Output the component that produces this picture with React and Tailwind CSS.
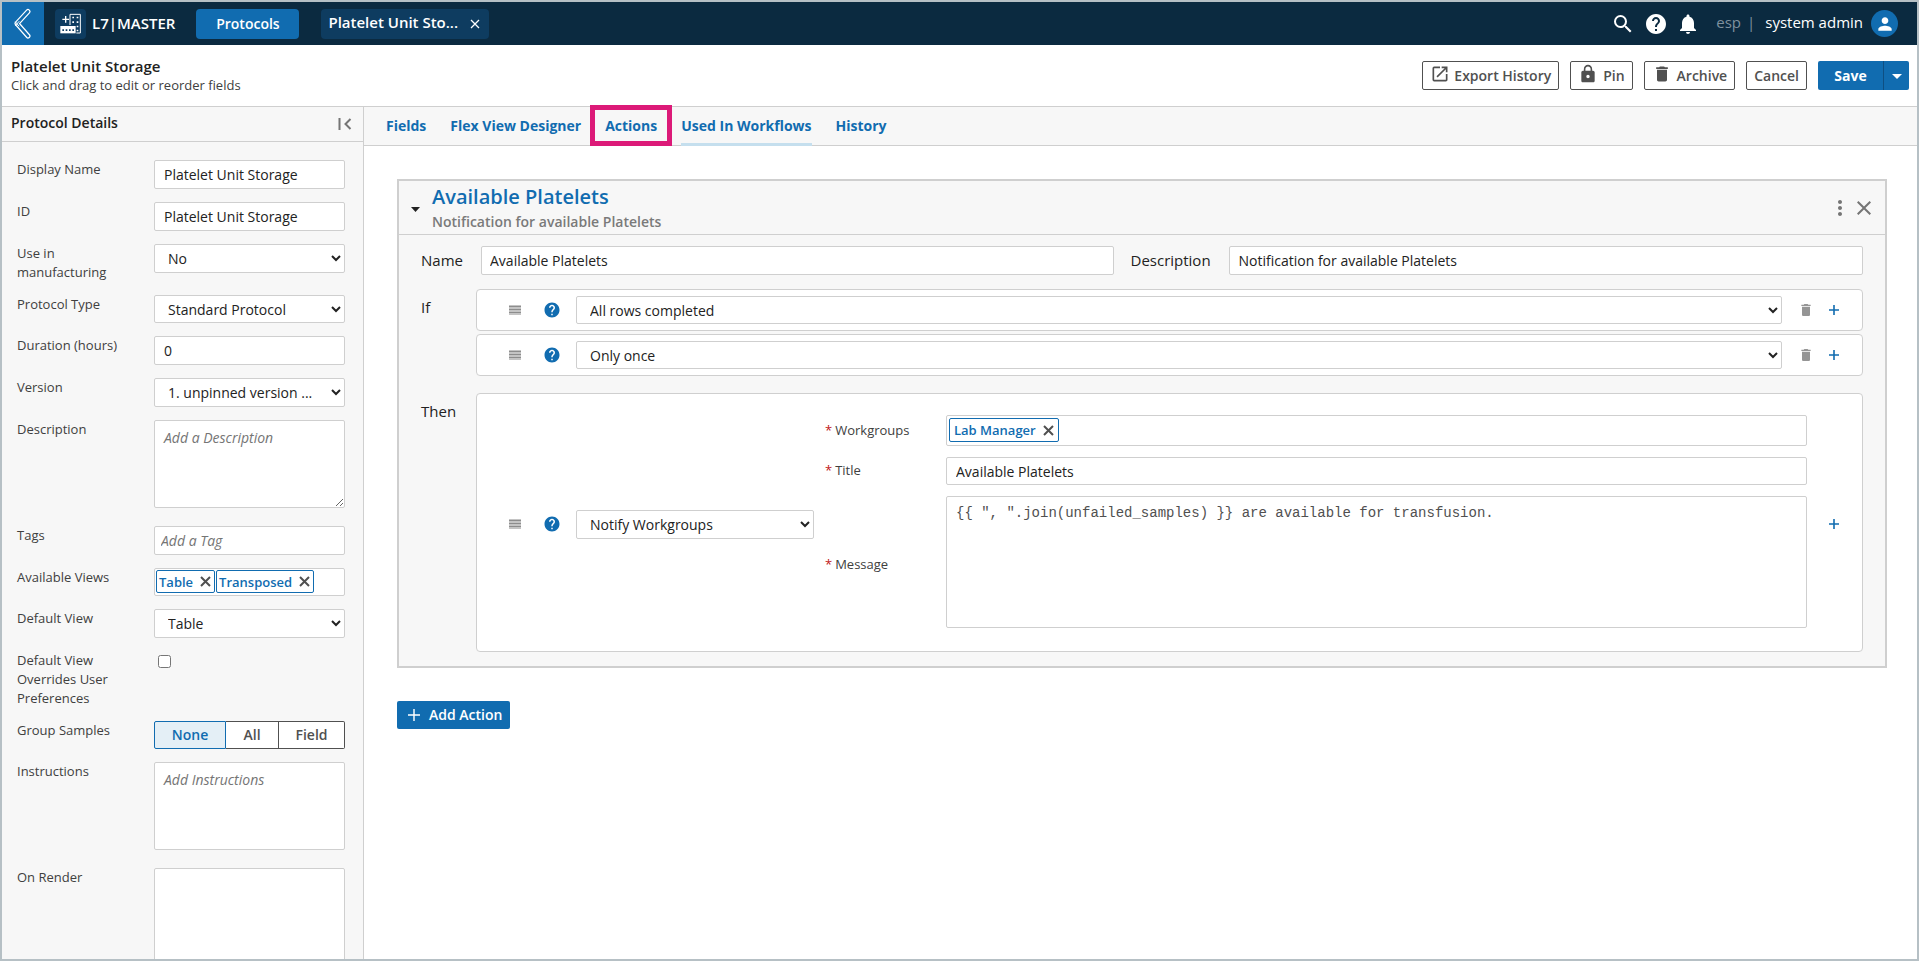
import {
    MdArrowDropDown,
    MdClose,
    MdDelete,
    MdHelp,
    MdLock,
    MdMoreVert,
    MdNotifications,
    MdOpenInNew,
    MdPerson,
    MdSearch,
} from 'react-icons/md';

const boxClass = 'w-full bg-white border border-[#cfcfcf] rounded-xs text-sm text-[#222]';
const inputClass = `${boxClass} h-[29px] px-[9px]`;
const selectClass = `${boxClass} pl-[9px]`;
const areaClass = `${boxClass} block px-[9px] py-[7px] placeholder:italic placeholder:text-[#757575]`;
const outlineButton = 'flex items-center h-[29px] border border-[#505050] rounded-xs bg-white text-[#505050] text-sm font-semibold';

function BackIcon() {
    return (
        <svg width="18" height="32" viewBox="0 0 18 32" fill="none" strokeLinecap="round" strokeLinejoin="round">
            <path d="M14 3.5 3 15.5 14 28" stroke="#fff" strokeWidth="5" />
            <path d="M14 3.5 3 15.5 14 28" stroke="#116cb0" strokeWidth="2.6" />
            <path d="M1.5 14 5 18M1.5 17.5 5 13.5" stroke="#fff" strokeWidth="1" />
        </svg>
    );
}

function BuildingIcon() {
    return (
        <svg width="22" height="21" viewBox="0 0 66 63" fill="none">
            <path d="M17 9v20M7 19h20" stroke="#fff" strokeWidth="4" />
            <path d="M30 36V4h31v56H49" stroke="#fff" strokeWidth="3" />
            <path d="M1 39h46v22H1z" fill="#fff" />
            <path d="M7 49h5v5H7zM17 49h5v5h-5zM27 49h5v5h-5zM37 49h5v5h-5z" fill="#0e3c60" />
            <path
                d="M37 11h5v5h-5zM50 11h5v5h-5zM37 25h5v5h-5zM50 25h5v5h-5zM50 38h5v5h-5zM50 50h5v5h-5z"
                fill="#fff"
            />
        </svg>
    );
}

function DragHandle() {
    return (
        <svg width="12" height="10" viewBox="0 0 12 10" className="shrink-0">
            <path d="M0 0h12v10H0z" fill="#c4c4c4" />
            <path d="M0 1.5h12M0 4.5h12M0 7.5h12" stroke="#8d8d8d" strokeWidth="1" />
        </svg>
    );
}

function PlusIcon({ size, width }) {
    return (
        <svg width={size} height={size} viewBox="0 0 10 10" fill="none">
            <path d="M5 0v10M0 5h10" stroke="currentColor" strokeWidth={width} />
        </svg>
    );
}

function CollapseIcon() {
    return (
        <svg width="14" height="14" viewBox="0 0 14 14" fill="none" stroke="#757575" strokeWidth="2">
            <path d="M1.5 1v12M12.5 2 7.5 7l5 5" />
        </svg>
    );
}

function Chip({ children, className }) {
    return (
        <span className={`flex items-center border border-[#116cb0] rounded-xs bg-white text-[13px] leading-5 font-semibold text-[#116cb0] ${className}`}>
            {children}
            <button type="button" aria-label={`Remove ${children}`} className="text-[#505050]">
                <svg width="11" height="11" viewBox="0 0 11 11" stroke="currentColor" strokeWidth="2">
                    <path d="m1 1 9 9M10 1l-9 9" />
                </svg>
            </button>
        </span>
    );
}

function TopBar() {
    return (
        <header className="flex items-center h-[43px] shrink-0 bg-[#0b2a40] text-white">
            <button type="button" aria-label="Back" className="flex items-center justify-center w-[42px] h-full bg-[#116cb0]">
                <BackIcon />
            </button>
            <div className="ml-[11px] flex items-center justify-center w-[31px] h-[30px] rounded bg-[#0e3c60]">
                <BuildingIcon />
            </div>
            <span className="ml-1.5 text-[15px] font-semibold">L7|MASTER</span>
            <button type="button" className="ml-[21px] w-[103px] h-[30px] rounded bg-[#116cb0] text-sm font-semibold">
                Protocols
            </button>
            <div className="ml-[22px] flex items-center justify-between w-[168px] h-[30px] pl-[7px] pr-[9px] rounded bg-[#0e3c60]">
                <span className="pb-0.5 text-[15px] font-semibold">Platelet Unit Sto...</span>
                <button type="button" aria-label="Close tab">
                    <svg width="10" height="10" viewBox="0 0 10 10" stroke="currentColor" strokeWidth="1.3">
                        <path d="m1 1 8 8M9 1 1 9" />
                    </svg>
                </button>
            </div>
            <div className="ml-auto mr-[19px] flex items-center">
                <button type="button" aria-label="Search"><MdSearch className="size-6" /></button>
                <button type="button" aria-label="Help" className="ml-[9px]"><MdHelp className="size-6" /></button>
                <button type="button" aria-label="Notifications" className="ml-2"><MdNotifications className="size-6" /></button>
                <span className="ml-4 pb-0.5 text-[15px] text-[#7f919e]">esp</span>
                <span className="ml-1.5 pb-0.5 text-[15px] text-[#7f919e]">|</span>
                <span className="ml-2.5 pb-0.5 text-[15px]">system admin</span>
                <button type="button" aria-label="Account" className="ml-2 flex items-center justify-center size-[27px] rounded-full bg-[#116cb0]">
                    <MdPerson className="size-5" />
                </button>
            </div>
        </header>
    );
}

function TitleBar() {
    return (
        <div className="flex items-center justify-between h-[62px] shrink-0 pl-[9px] pr-2 border-b border-[#cfcfcf]">
            <div className="pb-0.5">
                <h1 className="text-[15px] leading-5 font-semibold text-[#222]">Platelet Unit Storage</h1>
                <p className="text-[13px] leading-[18px] text-[#404040]">Click and drag to edit or reorder fields</p>
            </div>
            <div className="flex items-center gap-[11px]">
                <button type="button" className={`${outlineButton} pl-[7px] pr-[7px] gap-1`}>
                    <MdOpenInNew className="size-5 mb-1" />
                    Export History
                </button>
                <button type="button" className={`${outlineButton} pl-[7px] pr-[7px] gap-[5px]`}>
                    <MdLock className="size-5 mb-1" />
                    Pin
                </button>
                <button type="button" className={`${outlineButton} px-[7px] gap-[5px]`}>
                    <MdDelete className="size-5 mb-1" />
                    Archive
                </button>
                <button type="button" className={`${outlineButton} px-[7px]`}>Cancel</button>
                <div className="flex h-[29px] rounded-xs overflow-hidden bg-[#116cb0] text-white">
                    <button type="button" className="w-[66px] border-r border-[#0e4f82] text-sm font-bold">Save</button>
                    <button type="button" aria-label="More save options" className="w-[25px] flex items-center justify-center">
                        <MdArrowDropDown className="size-6" />
                    </button>
                </div>
            </div>
        </div>
    );
}

function Field({ label, id, children }) {
    return (
        <div className="flex items-start">
            <label htmlFor={id} className="w-[137px] pr-4 shrink-0 text-[13px] leading-[19px] text-[#404040]">
                {label}
            </label>
            <div className="flex-1 min-w-0">{children}</div>
        </div>
    );
}

function Sidebar() {
    return (
        <aside className="flex flex-col w-[362px] shrink-0 border-r border-[#cfcfcf] bg-[#f7f7f7]">
            <div className="flex items-center justify-between h-[35px] shrink-0 pl-[9px] pr-[11px] border-b border-[#cfcfcf]">
                <h2 className="pb-0.5 text-sm font-semibold text-[#222]">Protocol Details</h2>
                <button type="button" aria-label="Collapse panel"><CollapseIcon /></button>
            </div>
            <form className="flex flex-col gap-[13px] pt-[18px] pl-[15px] pr-[18px] overflow-hidden">
                <Field label="Display Name" id="display-name">
                    <input id="display-name" className={inputClass} defaultValue="Platelet Unit Storage" />
                </Field>
                <Field label="ID" id="protocol-id">
                    <input id="protocol-id" className={inputClass} defaultValue="Platelet Unit Storage" />
                </Field>
                <Field label="Use in manufacturing" id="manufacturing">
                    <select id="manufacturing" className={`${selectClass} h-[29px]`}>
                        <option>No</option>
                        <option>Yes</option>
                    </select>
                </Field>
                <Field label="Protocol Type" id="protocol-type">
                    <select id="protocol-type" className={`${selectClass} block h-7`}>
                        <option>Standard Protocol</option>
                    </select>
                </Field>
                <Field label="Duration (hours)" id="duration">
                    <input id="duration" className={inputClass} defaultValue="0" />
                </Field>
                <Field label="Version" id="version">
                    <select id="version" className={`${selectClass} h-[29px]`}>
                        <option>1. unpinned version ...</option>
                    </select>
                </Field>
                <Field label="Description" id="description">
                    <textarea id="description" className={`${areaClass} h-[88px] mb-[5px]`} placeholder="Add a Description" />
                </Field>
                <Field label="Tags" id="tags">
                    <input
                        id="tags"
                        className={`${boxClass} h-[29px] px-1.5 placeholder:italic placeholder:text-[#757575]`}
                        placeholder="Add a Tag"
                    />
                </Field>
                <Field label="Available Views">
                    <div className="flex items-start gap-px h-7 p-px bg-white border border-[#cfcfcf] rounded-xs">
                        <Chip className="h-[23px] pl-[2px] pr-[3px] gap-[7px]">Table</Chip>
                        <Chip className="h-[23px] pl-[2px] pr-[3px] gap-[7px]">Transposed</Chip>
                    </div>
                </Field>
                <Field label="Default View" id="default-view">
                    <select id="default-view" className={`${selectClass} h-[29px]`}>
                        <option>Table</option>
                        <option>Transposed</option>
                    </select>
                </Field>
                <Field label="Default View Overrides User Preferences" id="overrides">
                    <input id="overrides" type="checkbox" className="block size-[13px] mt-1 ml-1" />
                </Field>
                <Field label="Group Samples">
                    <div className="flex h-7 text-sm font-semibold text-[#505050]">
                        <button type="button" className="w-[72px] border border-[#116cb0] rounded-l-xs bg-[#e4eff6] text-[#116cb0]">None</button>
                        <button type="button" className="w-[53px] border-y border-r border-[#505050] bg-white">All</button>
                        <button type="button" className="flex-1 border-y border-r border-[#505050] rounded-r-xs bg-white">Field</button>
                    </div>
                </Field>
                <Field label="Instructions" id="instructions">
                    <textarea id="instructions" className={`${areaClass} h-[88px] mb-[5px] resize-none`} placeholder="Add Instructions" />
                </Field>
                <Field label="On Render" id="on-render">
                    <textarea id="on-render" className={`${areaClass} h-[120px] resize-none`} />
                </Field>
            </form>
        </aside>
    );
}

function Tabs() {
    return (
        <nav className="flex items-stretch gap-6 h-[39px] shrink-0 pl-[22px] border-b border-[#cfcfcf] bg-[#f7f7f7] text-sm leading-[38px] font-bold text-[#116cb0]">
            <a href="#fields">Fields</a>
            <a href="#flex-view">Flex View Designer</a>
            <a href="#actions" className="relative">
                Actions
                <span className="absolute -inset-x-[15px] -top-0.5 -bottom-px border-5 border-[#dc1a78]" />
            </a>
            <a href="#workflows" className="-mb-px border-b-3 border-[#c5dfee]">Used In Workflows</a>
            <a href="#history">History</a>
        </nav>
    );
}

function ConditionRow({ value, label }) {
    return (
        <div className="flex items-center h-[42px] pl-8 pr-[23px] bg-white border border-[#cfcfcf] rounded">
            <DragHandle />
            <MdHelp className="ml-[22px] size-[18px] shrink-0 text-[#116cb0]" />
            <select aria-label={label} className={`${selectClass} h-7 ml-[15px] flex-1`}>
                <option>{value}</option>
            </select>
            <button type="button" aria-label="Delete condition" className="ml-4 text-[#959595]">
                <MdDelete className="size-4" />
            </button>
            <button type="button" aria-label="Add condition" className="ml-[15px] text-[#116cb0]">
                <PlusIcon size={10} width={1.6} />
            </button>
        </div>
    );
}

function RequiredField({ label, id, children }) {
    return (
        <div className="flex items-center">
            <label htmlFor={id} className="w-[121px] shrink-0 text-[13px] text-[#404040]">
                <span className="mr-[3px] text-[#c01818]">*</span>
                {label}
            </label>
            <div className="flex-1 min-w-0">{children}</div>
        </div>
    );
}

function ActionPanel() {
    return (
        <section className="border-2 border-[#cfcfcf] bg-[#f7f7f7]">
            <div className="flex items-center h-[54px] pl-3 pr-[9px] border-b border-[#cfcfcf]">
                <button type="button" aria-label="Collapse action" className="pt-1">
                    <svg width="9" height="5" viewBox="0 0 9 5"><path d="M0 0h9L4.500 5z" fill="#222" /></svg>
                </button>
                <div className="ml-3">
                    <h3 className="text-xl leading-7 font-semibold text-[#116cb0]">Available Platelets</h3>
                    <p className="text-sm leading-[22px] font-semibold text-[#7a7a7a]">Notification for available Platelets</p>
                </div>
                <button type="button" aria-label="More options" className="ml-auto text-[#757575]">
                    <MdMoreVert className="size-6" />
                </button>
                <button type="button" aria-label="Remove action" className="text-[#757575]">
                    <MdClose className="size-6" />
                </button>
            </div>

            <div className="flex items-center pt-[11px] px-[22px] text-[15px] text-[#222]">
                <label htmlFor="action-name" className="w-[60px] shrink-0">Name</label>
                <input id="action-name" className={`${boxClass} h-[29px] px-2 flex-1`} defaultValue="Available Platelets" />
                <label htmlFor="action-description" className="ml-[17px] w-[98px] shrink-0">Description</label>
                <input
                    id="action-description"
                    className={`${boxClass} h-[29px] px-[9px] flex-1`}
                    defaultValue="Notification for available Platelets"
                />
            </div>

            <div className="flex pt-3.5 px-[22px]">
                <span className="w-[55px] pt-2 shrink-0 text-[15px] leading-5 text-[#222]">If</span>
                <div className="flex flex-col flex-1 gap-[3px]">
                    <ConditionRow label="First condition" value="All rows completed" />
                    <ConditionRow label="Second condition" value="Only once" />
                </div>
            </div>

            <div className="flex pt-[17px] pb-3.5 px-[22px]">
                <span className="w-[55px] pt-2 shrink-0 text-[15px] leading-5 text-[#222]">Then</span>
                <div className="flex items-center flex-1 pt-[21px] pb-[18px] pl-8 pr-[23px] bg-white border border-[#cfcfcf] rounded">
                    <DragHandle />
                    <MdHelp className="ml-[22px] size-[18px] shrink-0 text-[#116cb0]" />
                    <div className="ml-[15px] w-[238px] shrink-0">
                        <select aria-label="Action type" className={`${selectClass} block h-[29px]`}>
                            <option>Notify Workgroups</option>
                        </select>
                    </div>
                    <div className="ml-[11px] flex flex-col flex-1 gap-[11px]">
                        <RequiredField label="Workgroups">
                            <div className="flex h-[31px] p-0.5 bg-white border border-[#cfcfcf] rounded-xs">
                                <Chip className="h-6 px-1 gap-[7px]">Lab Manager</Chip>
                            </div>
                        </RequiredField>
                        <RequiredField label="Title" id="action-title">
                            <input id="action-title" className={`${boxClass} block h-7 px-[9px]`} defaultValue="Available Platelets" />
                        </RequiredField>
                        <RequiredField label="Message" id="action-message">
                            <textarea
                                id="action-message"
                                className="block w-full h-[132px] mb-[5px] px-[9px] py-1.5 resize-none bg-white border border-[#cfcfcf] rounded-xs font-['Liberation_Mono',monospace] text-sm text-[#505050]"
                                defaultValue={'{{ ", ".join(unfailed_samples) }} are available for transfusion.'}
                            />
                        </RequiredField>
                    </div>
                    <button type="button" aria-label="Add step" className="ml-[22px] text-[#116cb0]">
                        <PlusIcon size={10} width={1.6} />
                    </button>
                </div>
            </div>
        </section>
    );
}

export default function App() {
    return (
        <div className="flex flex-col h-screen overflow-hidden border-2 border-[#b6c0c5] bg-white font-['Open_Sans',sans-serif]">
            <TopBar />
            <TitleBar />
            <div className="flex flex-1 min-h-0">
                <Sidebar />
                <main className="flex flex-col flex-1 min-w-0">
                    <Tabs />
                    <div className="pt-[33px] pl-[33px] pr-[30px]">
                        <ActionPanel />
                        <button type="button" className="mt-[33px] flex items-center gap-[9px] h-7 pl-[11px] pr-2 rounded-xs bg-[#116cb0] text-white text-sm font-semibold">
                            <PlusIcon size={12} width={1.2} />
                            Add Action
                        </button>
                    </div>
                </main>
            </div>
        </div>
    );
}
